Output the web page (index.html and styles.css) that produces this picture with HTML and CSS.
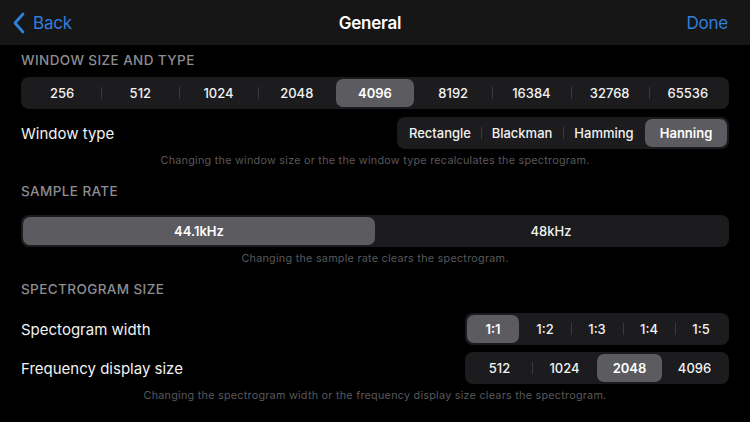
FILE: index.html
```html
<!DOCTYPE html>
<html>
<head>
<meta charset="utf-8">
<link rel="stylesheet" href="styles.css">
</head>
<body>
<header class="nav">
  <div class="nav-left">
    <svg class="chev" width="14" height="22" viewBox="0 0 14 22"><path d="M11 2 L3 11 L11 20" fill="none" stroke="#2f7fdc" stroke-width="2.8" stroke-linecap="round" stroke-linejoin="round"/></svg>
    <span class="nav-link">Back</span>
  </div>
  <div class="nav-title">General</div>
  <div class="nav-right"><span class="nav-link">Done</span></div>
</header>
<main class="content">
  <section class="section first">
    <h2 class="sec-title">Window size and type</h2>
    <div class="seg">
      <div class="item">256</div><div class="item">512</div><div class="item">1024</div><div class="item">2048</div><div class="item sel">4096</div><div class="item">8192</div><div class="item">16384</div><div class="item">32768</div><div class="item">65536</div>
    </div>
    <div class="row">
      <span class="label">Window type</span>
      <div class="seg w-type">
        <div class="item">Rectangle</div><div class="item">Blackman</div><div class="item">Hamming</div><div class="item sel">Hanning</div>
      </div>
    </div>
    <p class="note">Changing the window size or the the window type recalculates the spectrogram.</p>
  </section>
  <section class="section">
    <h2 class="sec-title">Sample rate</h2>
    <div class="seg">
      <div class="item sel">44.1kHz</div><div class="item">48kHz</div>
    </div>
    <p class="note">Changing the sample rate clears the spectrogram.</p>
  </section>
  <section class="section">
    <h2 class="sec-title">Spectrogram size</h2>
    <div class="row">
      <span class="label">Spectogram width</span>
      <div class="seg w-small">
        <div class="item sel">1:1</div><div class="item">1:2</div><div class="item">1:3</div><div class="item">1:4</div><div class="item">1:5</div>
      </div>
    </div>
    <div class="row">
      <span class="label">Frequency display size</span>
      <div class="seg w-small">
        <div class="item">512</div><div class="item">1024</div><div class="item sel">2048</div><div class="item">4096</div>
      </div>
    </div>
    <p class="note">Changing the spectrogram width or the frequency display size clears the spectrogram.</p>
  </section>
</main>
</body>
</html>
```
FILE: styles.css
```css
html, body {
  margin: 0;
  padding: 0;
  background: #000;
  color: #fff;
  font-family: Inter, "Open Sans", "Liberation Sans", sans-serif;
  width: 750px;
  height: 422px;
  overflow: hidden;
}

.nav {
  height: 45px;
  background: #161616;
  display: grid;
  grid-template-columns: 1fr auto 1fr;
  align-items: center;
  padding: 0 22px 0 12px;
}
.nav-left {
  display: flex;
  align-items: center;
  gap: 7px;
}
.chev { display: block; }
.nav-link {
  color: #2f7fdc;
  font-size: 17px;
  letter-spacing: -0.2px;
}
.nav-title {
  font-size: 17px;
  font-weight: 600;
  letter-spacing: -0.2px;
}
.nav-right {
  display: flex;
  justify-content: flex-end;
}

.content {
  padding: 0 21px;
}

.section {
  display: flex;
  flex-direction: column;
}
.sec-title {
  margin: 15px 0 16px;
  font-size: 13.5px;
  line-height: 16px;
  font-weight: 500;
  text-transform: uppercase;
  color: #8d8d92;
  letter-spacing: 0.4px;
}
.section.first .sec-title {
  margin-top: 7px;
  margin-bottom: 9px;
}

.seg {
  display: flex;
  height: 32px;
  box-sizing: border-box;
  padding: 2px;
  background: #1c1c1e;
  border-radius: 8px;
}
.item {
  flex: 1;
  position: relative;
  display: flex;
  align-items: center;
  justify-content: center;
  font-size: 13px;
  font-weight: 500;
  color: #f2f2f2;
  border-radius: 7px;
}
.item + .item::before {
  content: "";
  position: absolute;
  left: 0;
  top: 8px;
  bottom: 8px;
  width: 1px;
  background: #3a3a3c;
}
.item.sel {
  background: #5c5c60;
  color: #fff;
  font-weight: 600;
}
.item.sel::before,
.item.sel + .item::before {
  display: none;
}

.row {
  margin-top: 8px;
  display: flex;
  align-items: center;
  justify-content: space-between;
}
.section .row:first-of-type {
  margin-top: 0;
}
.section.first .row {
  margin-top: 8px;
}
.row + .row {
  margin-top: 7px;
}
.label {
  font-size: 15px;
  color: #f2f2f2;
}
.w-type {
  width: 332px;
}
.w-small {
  width: 264px;
}

.note {
  margin: 5px 0 0;
  text-align: center;
  font-size: 10.8px;
  line-height: 14px;
  color: #58585c;
  letter-spacing: 0.25px;
}
```
